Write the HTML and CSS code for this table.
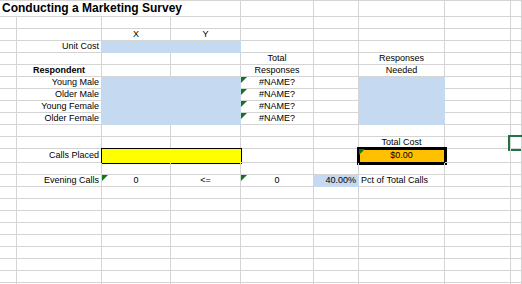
FILE: index.html
```html
<!DOCTYPE html>
<html>

<head>
	<meta charset="UTF-8">
	<title>Conducting a Marketing Survey</title>
	<link rel="stylesheet" href="styles.css">
</head>

<body>
	<table class="sheet">
		<colgroup>
			<col class="c-a">
			<col class="c-b">
			<col class="c-c">
			<col class="c-d">
			<col class="c-e">
			<col class="c-f">
			<col class="c-g">
			<col class="c-h">
			<col class="c-i">
		</colgroup>
		<tbody>
			<tr class="title-row">
				<td colspan="4" class="title">Conducting a Marketing Survey</td>
				<td></td><td></td><td></td><td></td><td></td>
			</tr>
			<tr><td></td><td></td><td></td><td></td><td></td><td></td><td></td><td></td><td></td></tr>
			<tr>
				<td></td><td></td>
				<td class="center">X</td>
				<td class="center">Y</td>
				<td></td><td></td><td></td><td></td><td></td>
			</tr>
			<tr>
				<td></td>
				<td class="right">Unit Cost</td>
				<td colspan="2" class="input"></td>
				<td></td><td></td><td></td><td></td><td></td>
			</tr>
			<tr>
				<td></td><td></td><td></td><td></td>
				<td class="center">Total</td>
				<td></td>
				<td class="center">Responses</td>
				<td></td><td></td>
			</tr>
			<tr>
				<td></td>
				<td class="center bold">Respondent</td>
				<td></td><td></td>
				<td class="center">Responses</td>
				<td></td>
				<td class="center">Needed</td>
				<td></td><td></td>
			</tr>
			<tr>
				<td></td>
				<td class="right">Young Male</td>
				<td colspan="2" rowspan="4" class="input"></td>
				<td class="center flag">#NAME?</td>
				<td></td>
				<td rowspan="4" class="input"></td>
				<td></td><td></td>
			</tr>
			<tr>
				<td></td>
				<td class="right">Older Male</td>
				<td class="center flag">#NAME?</td>
				<td></td><td></td><td></td>
			</tr>
			<tr>
				<td></td>
				<td class="right">Young Female</td>
				<td class="center flag">#NAME?</td>
				<td></td><td></td><td></td>
			</tr>
			<tr>
				<td></td>
				<td class="right">Older Female</td>
				<td class="center flag">#NAME?</td>
				<td></td><td></td><td></td>
			</tr>
			<tr><td></td><td></td><td></td><td></td><td></td><td></td><td></td><td></td><td></td></tr>
			<tr>
				<td></td><td></td><td></td><td></td><td></td><td></td>
				<td class="center">Total Cost</td>
				<td></td>
				<td class="active"></td>
			</tr>
			<tr class="tall-row">
				<td></td>
				<td class="right">Calls Placed</td>
				<td colspan="2" class="calls"></td>
				<td></td><td></td>
				<td class="center flag cost">$0.00</td>
				<td></td><td></td>
			</tr>
			<tr><td></td><td></td><td></td><td></td><td></td><td></td><td></td><td></td><td></td></tr>
			<tr>
				<td></td>
				<td class="right">Evening Calls</td>
				<td class="center flag">0</td>
				<td class="center">&lt;=</td>
				<td class="center flag">0</td>
				<td class="right input">40.00%</td>
				<td>Pct of Total Calls</td>
				<td></td><td></td>
			</tr>
			<tr><td></td><td></td><td></td><td></td><td></td><td></td><td></td><td></td><td></td></tr>
			<tr><td></td><td></td><td></td><td></td><td></td><td></td><td></td><td></td><td></td></tr>
			<tr><td></td><td></td><td></td><td></td><td></td><td></td><td></td><td></td><td></td></tr>
			<tr><td></td><td></td><td></td><td></td><td></td><td></td><td></td><td></td><td></td></tr>
			<tr><td></td><td></td><td></td><td></td><td></td><td></td><td></td><td></td><td></td></tr>
			<tr><td></td><td></td><td></td><td></td><td></td><td></td><td></td><td></td><td></td></tr>
			<tr><td></td><td></td><td></td><td></td><td></td><td></td><td></td><td></td><td></td></tr>
			<tr><td></td><td></td><td></td><td></td><td></td><td></td><td></td><td></td><td></td></tr>
			<tr><td></td><td></td><td></td><td></td><td></td><td></td><td></td><td></td><td></td></tr>
		</tbody>
	</table>
</body>

</html>
```

FILE: styles.css
```css
html,
body {
	margin: 0;
	overflow: hidden;
	background: #fff;
}

.sheet {
	table-layout: fixed;
	width: 522px;
	border-collapse: separate;
	border-spacing: 0;
	border-top: 1px solid #d4d4d4;
	font-family: "Liberation Sans", Arial, sans-serif;
	font-size: 9px;
	line-height: 11px;
	color: #000;
}

.c-a { width: 17px; }
.c-b { width: 85px; }
.c-c { width: 69px; }
.c-d { width: 70px; }
.c-e { width: 73px; }
.c-f { width: 45px; }
.c-g { width: 86px; }
.c-h { width: 66px; }
.c-i { width: 11px; }

.sheet tr {
	height: 12px;
}

.sheet td {
	position: relative;
	padding: 0 2px;
	border-right: 1px solid #d4d4d4;
	border-bottom: 1px solid #d4d4d4;
	white-space: nowrap;
	vertical-align: middle;
}

.sheet .title-row {
	height: 16px;
}

.sheet .tall-row {
	height: 14px;
}

.title {
	padding-left: 3px;
	font-size: 12px;
	font-weight: bold;
	line-height: 15px;
}

.center {
	text-align: center;
}

.right {
	text-align: right;
}

.bold {
	font-weight: bold;
}

/* cells waiting for input */
.sheet .input {
	background: #c5d9f1;
	border-color: #c5d9f1;
}

.sheet .calls {
	background: #ffff00;
	border-color: #ffff00;
	outline: 1px solid #000;
}

.sheet .cost {
	background: #ffc000;
	border-color: #ffc000;
	outline: 3px solid #000;
	outline-offset: -1px;
}

/* green error marker in the corner of a formula cell */
.flag::before {
	content: "";
	position: absolute;
	top: 0;
	left: 0;
	border-top: 6px solid #12741f;
	border-right: 6px solid transparent;
}

/* current cell */
.active::after {
	content: "";
	position: absolute;
	left: -3px;
	top: -2px;
	width: 20px;
	height: 12px;
	border: 2px solid #217346;
}
```
